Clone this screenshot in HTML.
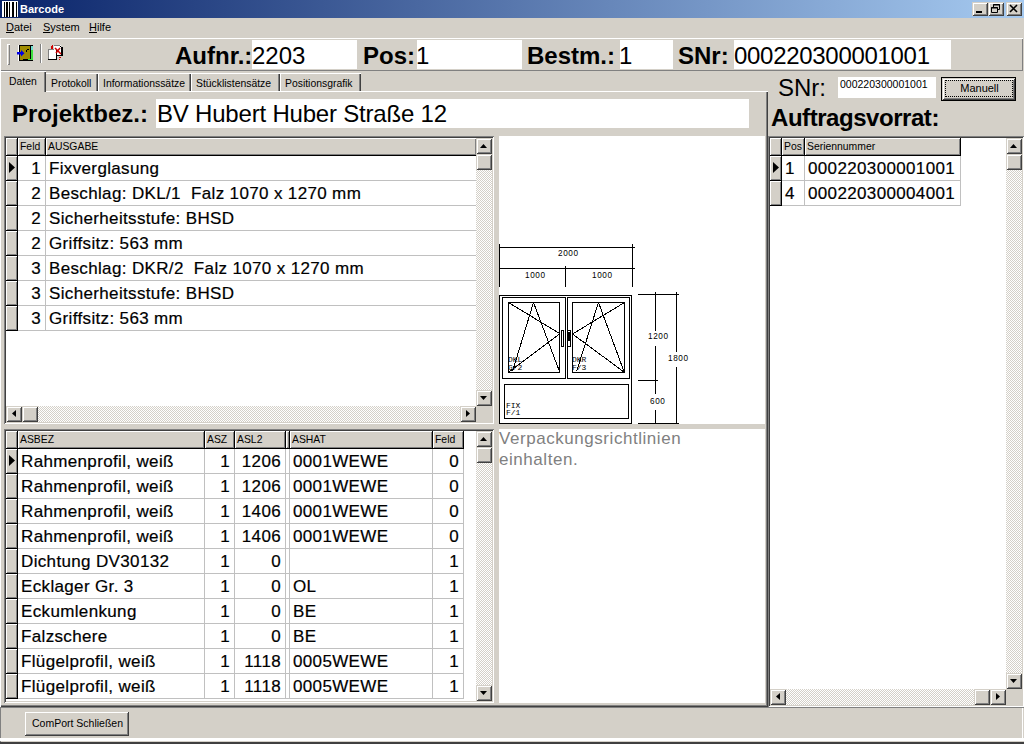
<!DOCTYPE html>
<html><head><meta charset="utf-8"><style>
*{margin:0;padding:0;box-sizing:border-box}
html,body{width:1024px;height:744px;overflow:hidden;background:#d4d0c8;font-family:"Liberation Sans",sans-serif;color:#000;position:relative}
div{position:absolute}
.t{white-space:nowrap}
.btn{background:#d4d0c8;box-shadow:inset 1px 1px #d4d0c8,inset -1px -1px #404040,inset 2px 2px #fff,inset -2px -2px #808080}
.sunk{box-shadow:inset 1px 1px #808080,inset -1px -1px #fff,inset 2px 2px #404040,inset -2px -2px #d4d0c8}
.track{background-color:#ebe9e5;background-image:repeating-conic-gradient(#fff 0 25%,#d4d0c8 0 50%);background-size:2px 2px}
.sb{width:16px;height:16px;background:#d4d0c8;box-shadow:inset 1px 1px #d4d0c8,inset -1px -1px #404040,inset 2px 2px #fff,inset -2px -2px #808080}
.hd{background:#d4d0c8;box-shadow:inset 1px 1px #fff,inset -1px -1px #808080;font-size:10.4px;line-height:17px;overflow:hidden;white-space:nowrap;padding-left:2px}
.ind{background:#d4d0c8;box-shadow:inset 1px 1px #fff,inset -1px -1px #808080}
.c{font-size:17px;letter-spacing:0.35px;line-height:26px;-webkit-text-stroke:0.2px #000;white-space:nowrap;overflow:hidden;background:#fff}
</style></head><body>
<div style="left:0px;top:0px;width:1024px;height:18px;background:linear-gradient(to right,#0a246a,#a6caf0)"></div>
<div style="left:2px;top:1px;width:16px;height:16px"><svg width="16" height="16" style="display:block"><rect width="16" height="16" fill="#fff"/><rect x="2" y="1" width="1" height="15" fill="#000"/><rect x="4" y="1" width="2" height="15" fill="#000"/><rect x="7" y="1" width="1" height="15" fill="#000"/><rect x="10" y="1" width="2" height="15" fill="#000"/><rect x="14" y="1" width="1" height="15" fill="#000"/></svg></div>
<div class="t" style="left:20px;top:1px;font-size:11px;font-weight:bold;color:#fff;line-height:16px">Barcode</div>
<div class="btn" style="left:972px;top:2px;width:16px;height:14px;"></div>
<div class="btn" style="left:988px;top:2px;width:16px;height:14px;"></div>
<div class="btn" style="left:1006px;top:2px;width:16px;height:14px;"></div>
<div style="left:972px;top:2px;width:16px;height:14px"><svg width="16" height="14" style="display:block"><rect x="4" y="9" width="6" height="2" fill="#000"/></svg></div>
<div style="left:988px;top:2px;width:16px;height:14px"><svg width="16" height="14" style="display:block"><path d="M5.5 2.5h6v5h-6z M5 3h7" stroke="#000" fill="none"/><path d="M3.5 5.5h6v5h-6z M3 6h7" stroke="#000" fill="#d4d0c8"/></svg></div>
<div style="left:1006px;top:2px;width:16px;height:14px"><svg width="16" height="14" style="display:block"><path d="M4 3 L11 10 M11 3 L4 10" stroke="#000" stroke-width="1.6"/></svg></div>
<div class="t" style="left:6px;top:19px;font-size:11px;line-height:17px"><u>D</u>atei</div>
<div class="t" style="left:43px;top:19px;font-size:11px;line-height:17px"><u>S</u>ystem</div>
<div class="t" style="left:89px;top:19px;font-size:11px;line-height:17px"><u>H</u>ilfe</div>
<div style="left:0px;top:38px;width:1023px;height:33px;box-shadow:inset 1px 1px #fff,inset -1px -1px #808080"></div>
<div style="left:7px;top:44px;width:3px;height:21px;box-shadow:inset 1px 1px #fff,inset -1px -1px #808080"></div>
<div style="left:40px;top:44px;width:2px;height:19px;box-shadow:inset 1px 0 #808080,inset -1px 0 #fff"></div>
<div style="left:17px;top:45px;width:17px;height:16px"><svg width="17" height="16" style="display:block" shape-rendering="crispEdges"><rect x="1" y="0" width="1" height="16" fill="#fff"/><rect x="2" y="0" width="14" height="16" fill="#000"/><rect x="3" y="1" width="10" height="13" fill="#a08c00"/><rect x="3" y="14" width="3" height="1" fill="#a08c00"/><rect x="14" y="1" width="2" height="14" fill="#40e040"/><rect x="14" y="1" width="2" height="4" fill="#70e0d0"/><rect x="11" y="14" width="4" height="1" fill="#40e040"/><rect x="10" y="4" width="2" height="1" fill="#000"/><rect x="9" y="5" width="1" height="2" fill="#000"/></svg></div>
<div style="left:17px;top:50px;width:8px;height:7px"><svg width="8" height="7" style="display:block"><path d="M0 2 H4 V0 L7.5 3.2 L4 6.5 V4.5 H0 Z" fill="#0000e8"/></svg></div>
<div style="left:48px;top:45px;width:16px;height:16px"><svg width="16" height="16" style="display:block" shape-rendering="crispEdges"><rect x="6" y="0" width="7" height="11" fill="#fff"/><rect x="6" y="0" width="6" height="1" fill="#808080"/><rect x="13" y="2" width="2" height="9" fill="#000"/><rect x="12" y="1" width="1" height="1" fill="#000"/><rect x="6" y="10" width="9" height="1" fill="#000"/><rect x="0" y="4" width="9" height="11" fill="#fff"/><rect x="0" y="4" width="1" height="11" fill="#808080"/><rect x="0" y="4" width="6" height="1" fill="#808080"/><rect x="8" y="5" width="1" height="10" fill="#000"/><rect x="0" y="14" width="9" height="1" fill="#000"/><path d="M7 3 L13 9 M12 3 L8 8" stroke="#d00000" stroke-width="1.5" shape-rendering="auto"/><rect x="3" y="1" width="2" height="3" fill="#d00000"/><rect x="4" y="0" width="1" height="1" fill="#d00000"/><rect x="11" y="12" width="2" height="1" fill="#d00000"/><rect x="11" y="14" width="1" height="1" fill="#d00000"/></svg></div>
<div class="t" style="left:175px;top:41px;font-size:24px;font-weight:bold;line-height:29px">Aufnr.:</div>
<div style="left:252px;top:40px;width:105px;height:29px;background:#fff"></div>
<div class="t" style="left:252px;top:41px;font-size:24px;line-height:29px">2203</div>
<div class="t" style="left:363px;top:41px;font-size:24px;font-weight:bold;line-height:29px">Pos:</div>
<div style="left:417px;top:40px;width:105px;height:29px;background:#fff"></div>
<div class="t" style="left:416px;top:41px;font-size:24px;line-height:29px">1</div>
<div class="t" style="left:527px;top:41px;font-size:24px;font-weight:bold;line-height:29px">Bestm.:</div>
<div style="left:620px;top:40px;width:53px;height:29px;background:#fff"></div>
<div class="t" style="left:619px;top:41px;font-size:24px;line-height:29px">1</div>
<div class="t" style="left:678px;top:41px;font-size:24px;font-weight:bold;line-height:29px">SNr:</div>
<div style="left:734px;top:40px;width:217px;height:29px;background:#fff"></div>
<div class="t" style="left:734px;top:41px;font-size:24px;line-height:29px;letter-spacing:-0.3px">000220300001001</div>
<div style="left:0px;top:91px;width:768px;height:616px;box-shadow:inset 1px 1px #fff,inset -1px -1px #404040,inset -2px -2px #808080"></div>
<div style="left:46px;top:73px;width:52px;height:18px;box-shadow:inset 0 1px #fff,inset -1px 0 #404040,inset -2px 0 #808080;background:#d4d0c8"></div>
<div class="t" style="left:51px;top:77px;font-size:10.4px;line-height:13px">Protokoll</div>
<div style="left:98px;top:73px;width:93px;height:18px;box-shadow:inset 1px 1px #fff,inset -1px 0 #404040,inset -2px 0 #808080;background:#d4d0c8"></div>
<div class="t" style="left:103px;top:77px;font-size:10.4px;line-height:13px">Informationssätze</div>
<div style="left:191px;top:73px;width:89px;height:18px;box-shadow:inset 1px 1px #fff,inset -1px 0 #404040,inset -2px 0 #808080;background:#d4d0c8"></div>
<div class="t" style="left:196px;top:77px;font-size:10.4px;line-height:13px">Stücklistensätze</div>
<div style="left:280px;top:73px;width:81px;height:18px;box-shadow:inset 1px 1px #fff,inset -1px 0 #404040,inset -2px 0 #808080;background:#d4d0c8"></div>
<div class="t" style="left:285px;top:77px;font-size:10.4px;line-height:13px">Positionsgrafik</div>
<div style="left:0px;top:71px;width:46px;height:21px;box-shadow:inset 1px 1px #fff,inset -1px 0 #404040,inset -2px 0 #808080;background:#d4d0c8"></div>
<div class="t" style="left:9px;top:75px;font-size:10.4px;line-height:13px">Daten</div>
<div class="t" style="left:12px;top:99px;font-size:24px;font-weight:bold;line-height:29px">Projektbez.:</div>
<div style="left:156px;top:99px;width:593px;height:29px;background:#fff"></div>
<div class="t" style="left:157px;top:99px;font-size:24px;line-height:29px;letter-spacing:-0.2px">BV Hubert Huber Straße 12</div>
<div class="sunk" style="left:4px;top:136px;width:490px;height:288px;background:#fff"></div>
<div style="left:6px;top:138px;width:471px;height:18px;background:#000"></div>
<div class="ind" style="left:6px;top:138px;width:11px;height:17px;"></div>
<div class="hd" style="left:18px;top:138px;width:27px;height:17px">Feld</div>
<div class="hd" style="left:46px;top:138px;width:430px;height:17px">AUSGABE</div>
<div style="left:6px;top:156px;width:12px;height:25px;background:#000"></div>
<div class="ind" style="left:6px;top:156px;width:11px;height:24px;"></div>
<div style="left:9px;top:162px;width:6px;height:11px"><svg width="6" height="11" style="display:block"><path d="M0 0 L6 5.5 L0 11 Z" fill="#000"/></svg></div>
<div style="left:18px;top:156px;width:459px;height:25px;background:#c0c0c0"></div>
<div class="c" style="left:18px;top:156px;width:27px;height:24px;text-align:right;padding-right:4px">1</div>
<div class="c" style="left:46px;top:156px;width:430px;height:24px;padding-left:3px">Fixverglasung</div>
<div style="left:6px;top:181px;width:12px;height:25px;background:#000"></div>
<div class="ind" style="left:6px;top:181px;width:11px;height:24px;"></div>
<div style="left:18px;top:181px;width:459px;height:25px;background:#c0c0c0"></div>
<div class="c" style="left:18px;top:181px;width:27px;height:24px;text-align:right;padding-right:4px">2</div>
<div class="c" style="left:46px;top:181px;width:430px;height:24px;padding-left:3px">Beschlag: DKL/1&nbsp; Falz 1070 x 1270 mm</div>
<div style="left:6px;top:206px;width:12px;height:25px;background:#000"></div>
<div class="ind" style="left:6px;top:206px;width:11px;height:24px;"></div>
<div style="left:18px;top:206px;width:459px;height:25px;background:#c0c0c0"></div>
<div class="c" style="left:18px;top:206px;width:27px;height:24px;text-align:right;padding-right:4px">2</div>
<div class="c" style="left:46px;top:206px;width:430px;height:24px;padding-left:3px">Sicherheitsstufe: BHSD</div>
<div style="left:6px;top:231px;width:12px;height:25px;background:#000"></div>
<div class="ind" style="left:6px;top:231px;width:11px;height:24px;"></div>
<div style="left:18px;top:231px;width:459px;height:25px;background:#c0c0c0"></div>
<div class="c" style="left:18px;top:231px;width:27px;height:24px;text-align:right;padding-right:4px">2</div>
<div class="c" style="left:46px;top:231px;width:430px;height:24px;padding-left:3px">Griffsitz: 563 mm</div>
<div style="left:6px;top:256px;width:12px;height:25px;background:#000"></div>
<div class="ind" style="left:6px;top:256px;width:11px;height:24px;"></div>
<div style="left:18px;top:256px;width:459px;height:25px;background:#c0c0c0"></div>
<div class="c" style="left:18px;top:256px;width:27px;height:24px;text-align:right;padding-right:4px">3</div>
<div class="c" style="left:46px;top:256px;width:430px;height:24px;padding-left:3px">Beschlag: DKR/2&nbsp; Falz 1070 x 1270 mm</div>
<div style="left:6px;top:281px;width:12px;height:25px;background:#000"></div>
<div class="ind" style="left:6px;top:281px;width:11px;height:24px;"></div>
<div style="left:18px;top:281px;width:459px;height:25px;background:#c0c0c0"></div>
<div class="c" style="left:18px;top:281px;width:27px;height:24px;text-align:right;padding-right:4px">3</div>
<div class="c" style="left:46px;top:281px;width:430px;height:24px;padding-left:3px">Sicherheitsstufe: BHSD</div>
<div style="left:6px;top:306px;width:12px;height:25px;background:#000"></div>
<div class="ind" style="left:6px;top:306px;width:11px;height:24px;"></div>
<div style="left:18px;top:306px;width:459px;height:25px;background:#c0c0c0"></div>
<div class="c" style="left:18px;top:306px;width:27px;height:24px;text-align:right;padding-right:4px">3</div>
<div class="c" style="left:46px;top:306px;width:430px;height:24px;padding-left:3px">Griffsitz: 563 mm</div>
<div class="track" style="left:476px;top:138px;width:16px;height:268px;"></div>
<div class="sb" style="left:476px;top:138px;width:16px;height:16px;"></div>
<div style="left:480px;top:144px;width:7px;height:4px"><svg width="7" height="4" style="display:block"><path d="M0 4 L3.5 0 L7 4 Z" fill="#000"/></svg></div>
<div class="sb" style="left:476px;top:154px;width:16px;height:16px;"></div>
<div class="sb" style="left:476px;top:390px;width:16px;height:16px;"></div>
<div style="left:480px;top:396px;width:7px;height:4px"><svg width="7" height="4" style="display:block"><path d="M0 0 L7 0 L3.5 4 Z" fill="#000"/></svg></div>
<div class="track" style="left:6px;top:406px;width:470px;height:16px;"></div>
<div class="sb" style="left:6px;top:406px;width:16px;height:16px;"></div>
<div style="left:12px;top:410px;width:4px;height:7px"><svg width="4" height="7" style="display:block"><path d="M4 0 L4 7 L0 3.5 Z" fill="#000"/></svg></div>
<div class="sb" style="left:22px;top:406px;width:16px;height:16px;"></div>
<div class="sb" style="left:460px;top:406px;width:16px;height:16px;"></div>
<div style="left:466px;top:410px;width:4px;height:7px"><svg width="4" height="7" style="display:block"><path d="M0 0 L4 3.5 L0 7 Z" fill="#000"/></svg></div>
<div style="left:476px;top:406px;width:16px;height:16px;background:#d4d0c8"></div>
<div class="sunk" style="left:4px;top:429px;width:490px;height:274px;background:#fff"></div>
<div style="left:6px;top:431px;width:458px;height:18px;background:#000"></div>
<div class="ind" style="left:6px;top:431px;width:11px;height:17px;"></div>
<div class="hd" style="left:18px;top:431px;width:186px;height:17px">ASBEZ</div>
<div class="hd" style="left:205px;top:431px;width:29px;height:17px">ASZ</div>
<div class="hd" style="left:235px;top:431px;width:50px;height:17px">ASL2</div>
<div class="hd" style="left:286px;top:431px;width:3px;height:17px"></div>
<div class="hd" style="left:290px;top:431px;width:142px;height:17px">ASHAT</div>
<div class="hd" style="left:433px;top:431px;width:30px;height:17px">Feld</div>
<div style="left:6px;top:449px;width:12px;height:25px;background:#000"></div>
<div class="ind" style="left:6px;top:449px;width:11px;height:24px;"></div>
<div style="left:9px;top:455px;width:6px;height:11px"><svg width="6" height="11" style="display:block"><path d="M0 0 L6 5.5 L0 11 Z" fill="#000"/></svg></div>
<div style="left:18px;top:449px;width:446px;height:25px;background:#c0c0c0"></div>
<div class="c" style="left:18px;top:449px;width:186px;height:24px;padding-left:3px">Rahmenprofil, weiß</div>
<div class="c" style="left:205px;top:449px;width:29px;height:24px;text-align:right;padding-right:4px">1</div>
<div class="c" style="left:235px;top:449px;width:50px;height:24px;text-align:right;padding-right:4px">1206</div>
<div class="c" style="left:286px;top:449px;width:3px;height:24px;padding-left:3px"></div>
<div class="c" style="left:290px;top:449px;width:142px;height:24px;padding-left:3px">0001WEWE</div>
<div class="c" style="left:433px;top:449px;width:30px;height:24px;text-align:right;padding-right:4px">0</div>
<div style="left:6px;top:474px;width:12px;height:25px;background:#000"></div>
<div class="ind" style="left:6px;top:474px;width:11px;height:24px;"></div>
<div style="left:18px;top:474px;width:446px;height:25px;background:#c0c0c0"></div>
<div class="c" style="left:18px;top:474px;width:186px;height:24px;padding-left:3px">Rahmenprofil, weiß</div>
<div class="c" style="left:205px;top:474px;width:29px;height:24px;text-align:right;padding-right:4px">1</div>
<div class="c" style="left:235px;top:474px;width:50px;height:24px;text-align:right;padding-right:4px">1206</div>
<div class="c" style="left:286px;top:474px;width:3px;height:24px;padding-left:3px"></div>
<div class="c" style="left:290px;top:474px;width:142px;height:24px;padding-left:3px">0001WEWE</div>
<div class="c" style="left:433px;top:474px;width:30px;height:24px;text-align:right;padding-right:4px">0</div>
<div style="left:6px;top:499px;width:12px;height:25px;background:#000"></div>
<div class="ind" style="left:6px;top:499px;width:11px;height:24px;"></div>
<div style="left:18px;top:499px;width:446px;height:25px;background:#c0c0c0"></div>
<div class="c" style="left:18px;top:499px;width:186px;height:24px;padding-left:3px">Rahmenprofil, weiß</div>
<div class="c" style="left:205px;top:499px;width:29px;height:24px;text-align:right;padding-right:4px">1</div>
<div class="c" style="left:235px;top:499px;width:50px;height:24px;text-align:right;padding-right:4px">1406</div>
<div class="c" style="left:286px;top:499px;width:3px;height:24px;padding-left:3px"></div>
<div class="c" style="left:290px;top:499px;width:142px;height:24px;padding-left:3px">0001WEWE</div>
<div class="c" style="left:433px;top:499px;width:30px;height:24px;text-align:right;padding-right:4px">0</div>
<div style="left:6px;top:524px;width:12px;height:25px;background:#000"></div>
<div class="ind" style="left:6px;top:524px;width:11px;height:24px;"></div>
<div style="left:18px;top:524px;width:446px;height:25px;background:#c0c0c0"></div>
<div class="c" style="left:18px;top:524px;width:186px;height:24px;padding-left:3px">Rahmenprofil, weiß</div>
<div class="c" style="left:205px;top:524px;width:29px;height:24px;text-align:right;padding-right:4px">1</div>
<div class="c" style="left:235px;top:524px;width:50px;height:24px;text-align:right;padding-right:4px">1406</div>
<div class="c" style="left:286px;top:524px;width:3px;height:24px;padding-left:3px"></div>
<div class="c" style="left:290px;top:524px;width:142px;height:24px;padding-left:3px">0001WEWE</div>
<div class="c" style="left:433px;top:524px;width:30px;height:24px;text-align:right;padding-right:4px">0</div>
<div style="left:6px;top:549px;width:12px;height:25px;background:#000"></div>
<div class="ind" style="left:6px;top:549px;width:11px;height:24px;"></div>
<div style="left:18px;top:549px;width:446px;height:25px;background:#c0c0c0"></div>
<div class="c" style="left:18px;top:549px;width:186px;height:24px;padding-left:3px">Dichtung DV30132</div>
<div class="c" style="left:205px;top:549px;width:29px;height:24px;text-align:right;padding-right:4px">1</div>
<div class="c" style="left:235px;top:549px;width:50px;height:24px;text-align:right;padding-right:4px">0</div>
<div class="c" style="left:286px;top:549px;width:3px;height:24px;padding-left:3px"></div>
<div class="c" style="left:290px;top:549px;width:142px;height:24px;padding-left:3px"></div>
<div class="c" style="left:433px;top:549px;width:30px;height:24px;text-align:right;padding-right:4px">1</div>
<div style="left:6px;top:574px;width:12px;height:25px;background:#000"></div>
<div class="ind" style="left:6px;top:574px;width:11px;height:24px;"></div>
<div style="left:18px;top:574px;width:446px;height:25px;background:#c0c0c0"></div>
<div class="c" style="left:18px;top:574px;width:186px;height:24px;padding-left:3px">Ecklager Gr. 3</div>
<div class="c" style="left:205px;top:574px;width:29px;height:24px;text-align:right;padding-right:4px">1</div>
<div class="c" style="left:235px;top:574px;width:50px;height:24px;text-align:right;padding-right:4px">0</div>
<div class="c" style="left:286px;top:574px;width:3px;height:24px;padding-left:3px"></div>
<div class="c" style="left:290px;top:574px;width:142px;height:24px;padding-left:3px">OL</div>
<div class="c" style="left:433px;top:574px;width:30px;height:24px;text-align:right;padding-right:4px">1</div>
<div style="left:6px;top:599px;width:12px;height:25px;background:#000"></div>
<div class="ind" style="left:6px;top:599px;width:11px;height:24px;"></div>
<div style="left:18px;top:599px;width:446px;height:25px;background:#c0c0c0"></div>
<div class="c" style="left:18px;top:599px;width:186px;height:24px;padding-left:3px">Eckumlenkung</div>
<div class="c" style="left:205px;top:599px;width:29px;height:24px;text-align:right;padding-right:4px">1</div>
<div class="c" style="left:235px;top:599px;width:50px;height:24px;text-align:right;padding-right:4px">0</div>
<div class="c" style="left:286px;top:599px;width:3px;height:24px;padding-left:3px"></div>
<div class="c" style="left:290px;top:599px;width:142px;height:24px;padding-left:3px">BE</div>
<div class="c" style="left:433px;top:599px;width:30px;height:24px;text-align:right;padding-right:4px">1</div>
<div style="left:6px;top:624px;width:12px;height:25px;background:#000"></div>
<div class="ind" style="left:6px;top:624px;width:11px;height:24px;"></div>
<div style="left:18px;top:624px;width:446px;height:25px;background:#c0c0c0"></div>
<div class="c" style="left:18px;top:624px;width:186px;height:24px;padding-left:3px">Falzschere</div>
<div class="c" style="left:205px;top:624px;width:29px;height:24px;text-align:right;padding-right:4px">1</div>
<div class="c" style="left:235px;top:624px;width:50px;height:24px;text-align:right;padding-right:4px">0</div>
<div class="c" style="left:286px;top:624px;width:3px;height:24px;padding-left:3px"></div>
<div class="c" style="left:290px;top:624px;width:142px;height:24px;padding-left:3px">BE</div>
<div class="c" style="left:433px;top:624px;width:30px;height:24px;text-align:right;padding-right:4px">1</div>
<div style="left:6px;top:649px;width:12px;height:25px;background:#000"></div>
<div class="ind" style="left:6px;top:649px;width:11px;height:24px;"></div>
<div style="left:18px;top:649px;width:446px;height:25px;background:#c0c0c0"></div>
<div class="c" style="left:18px;top:649px;width:186px;height:24px;padding-left:3px">Flügelprofil, weiß</div>
<div class="c" style="left:205px;top:649px;width:29px;height:24px;text-align:right;padding-right:4px">1</div>
<div class="c" style="left:235px;top:649px;width:50px;height:24px;text-align:right;padding-right:4px">1118</div>
<div class="c" style="left:286px;top:649px;width:3px;height:24px;padding-left:3px"></div>
<div class="c" style="left:290px;top:649px;width:142px;height:24px;padding-left:3px">0005WEWE</div>
<div class="c" style="left:433px;top:649px;width:30px;height:24px;text-align:right;padding-right:4px">1</div>
<div style="left:6px;top:674px;width:12px;height:25px;background:#000"></div>
<div class="ind" style="left:6px;top:674px;width:11px;height:24px;"></div>
<div style="left:18px;top:674px;width:446px;height:25px;background:#c0c0c0"></div>
<div class="c" style="left:18px;top:674px;width:186px;height:24px;padding-left:3px">Flügelprofil, weiß</div>
<div class="c" style="left:205px;top:674px;width:29px;height:24px;text-align:right;padding-right:4px">1</div>
<div class="c" style="left:235px;top:674px;width:50px;height:24px;text-align:right;padding-right:4px">1118</div>
<div class="c" style="left:286px;top:674px;width:3px;height:24px;padding-left:3px"></div>
<div class="c" style="left:290px;top:674px;width:142px;height:24px;padding-left:3px">0005WEWE</div>
<div class="c" style="left:433px;top:674px;width:30px;height:24px;text-align:right;padding-right:4px">1</div>
<div class="track" style="left:476px;top:431px;width:16px;height:270px;"></div>
<div class="sb" style="left:476px;top:431px;width:16px;height:16px;"></div>
<div style="left:480px;top:437px;width:7px;height:4px"><svg width="7" height="4" style="display:block"><path d="M0 4 L3.5 0 L7 4 Z" fill="#000"/></svg></div>
<div class="sb" style="left:476px;top:447px;width:16px;height:16px;"></div>
<div class="sb" style="left:476px;top:685px;width:16px;height:16px;"></div>
<div style="left:480px;top:691px;width:7px;height:4px"><svg width="7" height="4" style="display:block"><path d="M0 0 L7 0 L3.5 4 Z" fill="#000"/></svg></div>
<div style="left:499px;top:136px;width:266px;height:288px;background:#fff"></div>
<div style="left:499px;top:136px;width:266px;height:288px;overflow:hidden"><svg width="266" height="288" style="display:block"><g transform="translate(-499,-136)"><g stroke="#000" stroke-width="1" fill="none" shape-rendering="crispEdges"><line x1="499.5" y1="244" x2="499.5" y2="287"/><line x1="632.5" y1="244" x2="632.5" y2="287"/><line x1="500" y1="247.5" x2="635" y2="247.5"/><line x1="500" y1="268.5" x2="635" y2="268.5"/><line x1="565.5" y1="266" x2="565.5" y2="287"/><rect x="499.5" y="295.5" width="132" height="128"/><rect x="502.5" y="297.5" width="63" height="81"/><rect x="567.5" y="297.5" width="62" height="81"/><rect x="508.5" y="302.5" width="51" height="70"/><rect x="572.5" y="302.5" width="52" height="70"/><rect x="504.5" y="384.5" width="124" height="34"/><line x1="508.5" y1="302.5" x2="559.5" y2="333.5"/><line x1="559.5" y1="334" x2="509" y2="372"/><line x1="533.5" y1="302.5" x2="512.5" y2="371.5"/><line x1="533.5" y1="302.5" x2="559.5" y2="371.5"/><line x1="624.5" y1="302.5" x2="572.5" y2="334"/><line x1="572.5" y1="334" x2="624" y2="372"/><line x1="598.5" y1="302.5" x2="576.5" y2="371.5"/><line x1="598.5" y1="302.5" x2="624" y2="371.5"/><rect x="561.5" y="330.5" width="2" height="16"/><rect x="567.5" y="330.5" width="3" height="16"/><rect x="568" y="332" width="2" height="8" fill="#000"/><line x1="638" y1="294.5" x2="679" y2="294.5"/><line x1="638" y1="380.5" x2="658" y2="380.5"/><line x1="638" y1="423.5" x2="679" y2="423.5"/><line x1="655.5" y1="292" x2="655.5" y2="331"/><line x1="655.5" y1="346" x2="655.5" y2="394"/><line x1="655.5" y1="410" x2="655.5" y2="424"/><line x1="676.5" y1="292" x2="676.5" y2="352"/><line x1="676.5" y1="367" x2="676.5" y2="424"/></g><g font-family="Liberation Mono" font-size="8" fill="#000"><text x="558" y="256" font-family="Liberation Sans" letter-spacing="0.6" font-size="8.2" font-weight="normal">2000</text><text x="525" y="278" font-family="Liberation Sans" letter-spacing="0.6" font-size="8.2" font-weight="normal">1000</text><text x="592" y="278" font-family="Liberation Sans" letter-spacing="0.6" font-size="8.2" font-weight="normal">1000</text><text x="648" y="339" font-family="Liberation Sans" letter-spacing="0.6" font-size="8.2" font-weight="normal">1200</text><text x="668" y="361" font-family="Liberation Sans" letter-spacing="0.6" font-size="8.2" font-weight="normal">1800</text><text x="650" y="404" font-family="Liberation Sans" letter-spacing="0.6" font-size="8.2" font-weight="normal">600</text><text x="508" y="362">DKL</text><text x="508" y="370">G/2</text><text x="572" y="362">DKR</text><text x="572" y="370">F/3</text><text x="506" y="408">FIX</text><text x="506" y="415">F/1</text></g></g></svg></div>
<div style="left:499px;top:429px;width:266px;height:274px;background:#fff"></div>
<div class="t" style="left:499px;top:429px;font-size:17px;letter-spacing:0.55px;line-height:20.5px;color:#808080">Verpackungsrichtlinien<br>einhalten.</div>
<div class="t" style="left:778px;top:73px;font-size:24px;line-height:29px">SNr:</div>
<div style="left:838px;top:77px;width:98px;height:21px;background:#fff"></div>
<div class="t" style="left:840px;top:78px;font-size:10.5px;line-height:13px">000220300001001</div>
<div style="left:941px;top:77px;width:75px;height:24px;background:#000"></div>
<div class="btn" style="left:942px;top:78px;width:73px;height:22px;"></div>
<div style="left:945px;top:80px;width:68px;height:17px;border:1px dotted #000"></div>
<div class="t" style="left:942px;top:81px;font-size:11px;line-height:14px;width:75px;text-align:center">Manuell</div>
<div class="t" style="left:771px;top:103px;font-size:24px;font-weight:bold;line-height:29px;letter-spacing:-0.45px">Auftragsvorrat:</div>
<div class="sunk" style="left:768px;top:136px;width:256px;height:571px;background:#fff"></div>
<div style="left:770px;top:138px;width:191px;height:18px;background:#000"></div>
<div class="ind" style="left:770px;top:138px;width:11px;height:17px;"></div>
<div class="hd" style="left:782px;top:138px;width:22px;height:17px">Pos</div>
<div class="hd" style="left:805px;top:138px;width:155px;height:17px">Seriennummer</div>
<div style="left:770px;top:156px;width:12px;height:25px;background:#000"></div>
<div class="ind" style="left:770px;top:156px;width:11px;height:24px;"></div>
<div style="left:773px;top:162px;width:6px;height:11px"><svg width="6" height="11" style="display:block"><path d="M0 0 L6 5.5 L0 11 Z" fill="#000"/></svg></div>
<div style="left:782px;top:156px;width:179px;height:25px;background:#c0c0c0"></div>
<div class="c" style="left:782px;top:156px;width:22px;height:24px;padding-left:3px">1</div>
<div class="c" style="left:805px;top:156px;width:155px;height:24px;padding-left:3px">000220300001001</div>
<div style="left:770px;top:181px;width:12px;height:25px;background:#000"></div>
<div class="ind" style="left:770px;top:181px;width:11px;height:24px;"></div>
<div style="left:782px;top:181px;width:179px;height:25px;background:#c0c0c0"></div>
<div class="c" style="left:782px;top:181px;width:22px;height:24px;padding-left:3px">4</div>
<div class="c" style="left:805px;top:181px;width:155px;height:24px;padding-left:3px">000220300004001</div>
<div class="track" style="left:1006px;top:138px;width:16px;height:551px;"></div>
<div class="sb" style="left:1006px;top:138px;width:16px;height:16px;"></div>
<div style="left:1010px;top:144px;width:7px;height:4px"><svg width="7" height="4" style="display:block"><path d="M0 4 L3.5 0 L7 4 Z" fill="#000"/></svg></div>
<div class="sb" style="left:1006px;top:154px;width:16px;height:16px;"></div>
<div class="sb" style="left:1006px;top:673px;width:16px;height:16px;"></div>
<div style="left:1010px;top:679px;width:7px;height:4px"><svg width="7" height="4" style="display:block"><path d="M0 0 L7 0 L3.5 4 Z" fill="#000"/></svg></div>
<div class="track" style="left:770px;top:689px;width:236px;height:16px;"></div>
<div class="sb" style="left:770px;top:689px;width:16px;height:16px;"></div>
<div style="left:776px;top:693px;width:4px;height:7px"><svg width="4" height="7" style="display:block"><path d="M4 0 L4 7 L0 3.5 Z" fill="#000"/></svg></div>
<div class="sb" style="left:974px;top:689px;width:16px;height:16px;"></div>
<div class="sb" style="left:990px;top:689px;width:16px;height:16px;"></div>
<div style="left:996px;top:693px;width:4px;height:7px"><svg width="4" height="7" style="display:block"><path d="M0 0 L4 3.5 L0 7 Z" fill="#000"/></svg></div>
<div style="left:1006px;top:689px;width:16px;height:16px;background:#d4d0c8"></div>
<div style="left:0px;top:707px;width:1024px;height:37px;box-shadow:inset 0 1px #808080,inset 1px 0 #808080"></div>
<div style="left:1022px;top:708px;width:1px;height:30px;background:#fff"></div>
<div style="left:0px;top:738px;width:1024px;height:3px;background:#fff"></div>
<div style="left:0px;top:742px;width:1024px;height:2px;background:#404040"></div>
<div class="btn" style="left:24px;top:711px;width:105px;height:25px;"></div>
<div class="t" style="left:25px;top:717px;font-size:10.5px;line-height:13px;width:105px;text-align:center">ComPort Schließen</div>
</body></html>
